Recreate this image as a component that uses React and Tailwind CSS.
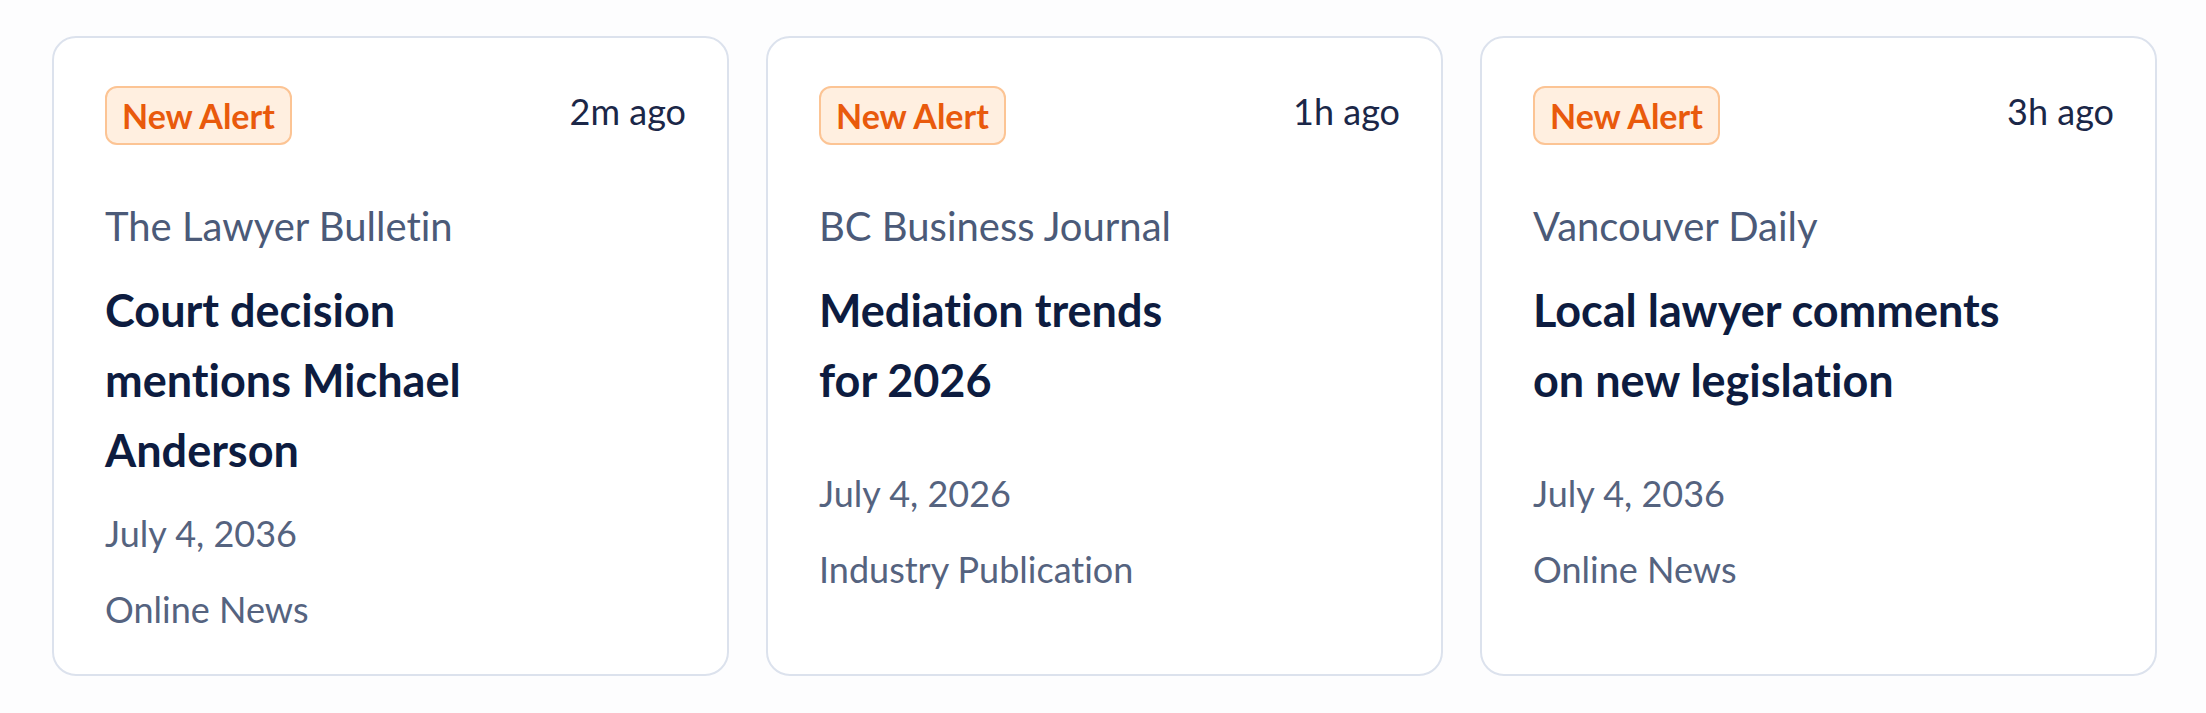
import React from "react";

const cards = [
  {
    time: "2m ago",
    source: "The Lawyer Bulletin",
    title: ["Court decision", "mentions Michael", "Anderson"],
    date: "July 4, 2036",
    type: "Online News",
  },
  {
    time: "1h ago",
    source: "BC Business Journal",
    title: ["Mediation trends", "for 2026"],
    date: "July 4, 2026",
    type: "Industry Publication",
  },
  {
    time: "3h ago",
    source: "Vancouver Daily",
    title: ["Local lawyer comments", "on new legislation"],
    date: "July 4, 2036",
    type: "Online News",
  },
];

function AlertCard({ card }) {
  return (
    <div className="flex flex-col rounded-[24px] border-2 border-[#dce2ed] bg-white pl-[51px] pr-[41px] pt-[48px] pb-[43px]">
      <div className="flex items-start justify-between">
        <span className="flex h-[59px] items-center rounded-[12px] border-2 border-[#fcc494] bg-[#ffefe0] px-[15px] text-[34px] font-bold leading-none text-[#e95a0c]">
          New Alert
        </span>
        <span className="mt-[3px] text-[36px] leading-[44px] text-[#1b2748]">{card.time}</span>
      </div>
      <div className="mt-[57px] text-[40px] leading-[48px] text-[#4b5a78]">{card.source}</div>
      <div className="mt-[25px] min-h-[170px] text-[45px] font-bold leading-[70px] text-[#0d1c40]">
        {card.title.map((line) => (
          <div key={line} className="whitespace-nowrap">
            {line}
          </div>
        ))}
      </div>
      <div className="mt-[26px] text-[36px] leading-[44px] text-[#55637f]">{card.date}</div>
      <div className="mt-[32px] text-[36px] leading-[44px] text-[#55637f]">{card.type}</div>
    </div>
  );
}

export default function App() {
  return (
    <div className="min-h-[713px] bg-[#fdfdfe] pl-[52px] pr-[49px] pt-[36px] pb-[37px] font-['Lato',sans-serif] [font-variant-ligatures:none]">
      <div className="grid grid-cols-3 gap-[37px]">
        {cards.map((c) => (
          <AlertCard key={c.source} card={c} />
        ))}
      </div>
    </div>
  );
}
